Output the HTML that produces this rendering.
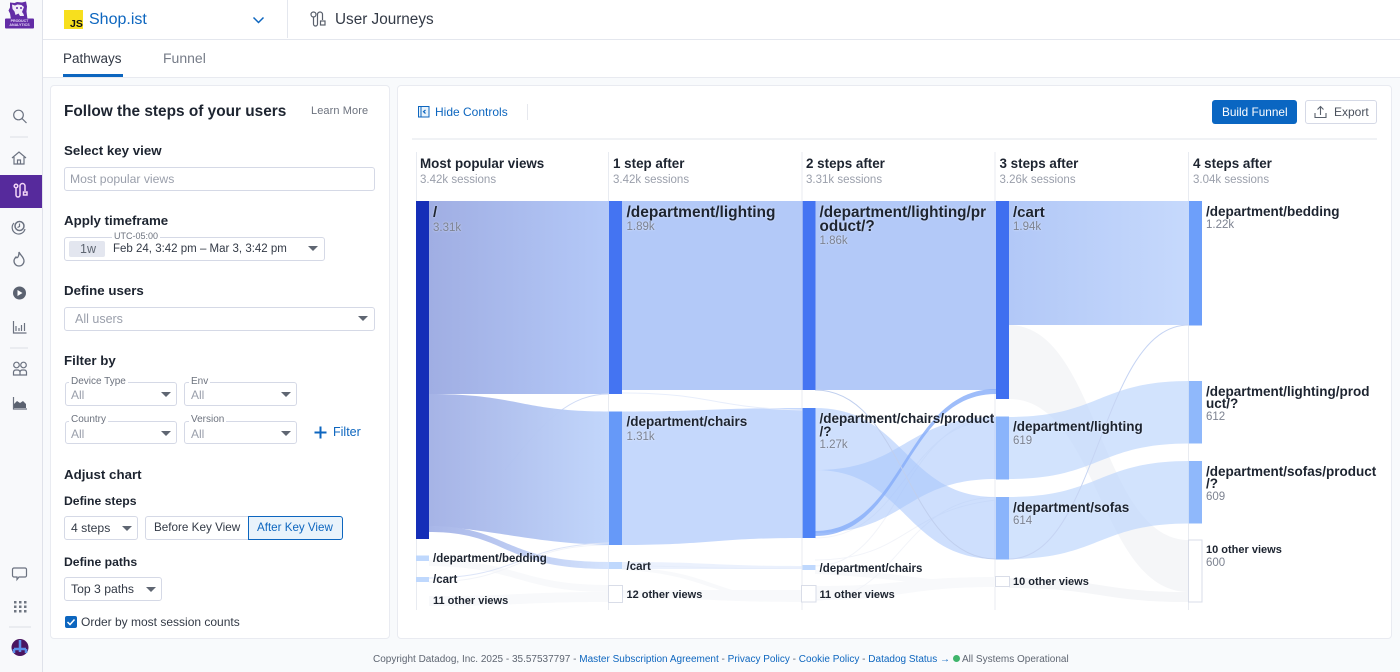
<!DOCTYPE html>
<html><head><meta charset="utf-8"><title>User Journeys</title>
<style>
*{box-sizing:border-box}
html,body{margin:0;padding:0;width:1400px;height:672px;overflow:hidden;background:#f8fafc;font-family:"Liberation Sans",sans-serif;color:#2a303c}
.a{position:absolute}
.t{position:absolute;white-space:nowrap;line-height:16px;height:16px;margin-top:1px}
.b{font-weight:700;color:#1d2430}
.h1{font-size:13.3px}
.box{position:absolute;background:#fff;border:1px solid #d5d9e6;border-radius:3px}
.car{position:absolute;width:0;height:0;border-left:5px solid transparent;border-right:5px solid transparent;border-top:5px solid #5f6672}
.g{color:#9a9fab}
.lab{font-size:10px;color:#6c727e;background:#fff;padding:0 2px;line-height:11px;height:11px}
.sa{font-size:13.5px;font-weight:700;color:#1d2430;text-shadow:0 0 2px rgba(255,255,255,.6)}
.sb{font-size:11.5px;color:#7d8391;text-shadow:0 0 2px rgba(255,255,255,.6)}
.hd{font-size:13.4px;font-weight:700;color:#1d2430}
.hs{font-size:11.5px;color:#9a9fab}
svg{position:absolute;overflow:visible}
</style></head><body>

<!-- sidebar -->
<div class="a" style="left:0;top:0;width:43px;height:672px;background:#f8f9fb;border-right:1px solid #dfe2ea"></div>
<svg style="left:0;top:0" width="43" height="672" fill="none" stroke="#6b7280" stroke-width="1.2">
<g stroke="none">
<path fill="#632ca6" d="M10 2.500l4.500.5 2.500-1 5 .5 4-1 1 5-.5 5 1 8H11l-1-6-1.500-3 1.500-3z"/>
<path fill="#f1ecf9" d="M12 4.500l3 1 2.500-1 4 .5 2.500 2-1 2.500-1 2.500 1.500 2 .5 2h-4l-1.500-2.500-3 1.500-1-3.500-2-2.500z"/>
<circle cx="17" cy="8" r="1" fill="#632ca6"/><circle cx="21" cy="8" r="1" fill="#632ca6"/>
<rect x="5" y="18.500" width="29" height="10" rx="1" fill="#632ca6"/>
</g>
<circle cx="18.500" cy="115" r="4.800"/><path d="M22 118.500l4.500 4.500"/>
<path d="M10 137h18M10 348h18M9 627h22" stroke="#e2e4ea"/>
<path d="M12 158l7-6 7 6M14 157v7h10v-7M17.500 164v-4h3v4"/>
<rect x="0" y="175" width="42" height="33" fill="#562a9c" stroke="none"/>
<g stroke="#f3d6f7" stroke-width="1.500"><path d="M16 187v8a2 2 0 0 0 4 0v-9a2.500 2.500 0 0 1 5 0v5"/><circle cx="16" cy="186" r="1.800"/><rect x="23.500" y="192" width="3.500" height="3"/></g>
<circle cx="19.500" cy="226" r="4.500" stroke-width="1.500"/><path d="M14 223a6.500 6.500 0 1 0 11 6M19.500 223.500v3l-2 1"/>
<path d="M19 252c1 3 5 5 5 9a5 5 0 0 1-10 0c0-2 1-3 2-4 1 2 3 0 3-5z" stroke-width="1.300"/>
<circle cx="19.500" cy="293" r="6.500" fill="#5b6270" stroke="none"/><path d="M17.500 290v6l5-3z" fill="#fff" stroke="none"/>
<path d="M13.500 321v12h13M16 331v-5M19 331v-3M21.500 331v-6M24.500 331v-8"/>
<circle cx="16.500" cy="365" r="2.800"/><circle cx="23.500" cy="365" r="2.800"/><path d="M13.500 375v-3a2.500 2.500 0 0 1 2.500-2h1.500a2.500 2.500 0 0 1 2.500 2v3zM20 375v-3a2.500 2.500 0 0 1 2.500-2h1.500a2.500 2.500 0 0 1 2.500 2v3z"/>
<path d="M13.500 397v12h13.500"/><path d="M14 408v-4l3-3 3 2 3-2 3 3v4z" fill="#5b6270" stroke="none"/>
<path d="M14 568h11a1.500 1.500 0 0 1 1.500 1.500v6a1.500 1.500 0 0 1-1.500 1.500h-6l-2 2.500v-2.500h-3a1.500 1.500 0 0 1-1.500-1.500v-6a1.500 1.500 0 0 1 1.500-1.500z"/>
<g fill="#6f7682" stroke="none"><rect x="14" y="601" width="2.500" height="2.500"/><rect x="19" y="601" width="2.500" height="2.500"/><rect x="24" y="601" width="2.500" height="2.500"/><rect x="14" y="605.500" width="2.500" height="2.500"/><rect x="19" y="605.500" width="2.500" height="2.500"/><rect x="24" y="605.500" width="2.500" height="2.500"/><rect x="14" y="610" width="2.500" height="2.500"/><rect x="19" y="610" width="2.500" height="2.500"/><rect x="24" y="610" width="2.500" height="2.500"/></g>
<circle cx="20" cy="647.500" r="8.500" fill="#4a1560" stroke="none"/><path d="M20 640v9M14 649h12M14 649v4M26 649v4M20 649v3" stroke="#5b8fe8" stroke-width="2.500"/>
</svg>
<div class="a" style="left:5px;top:19px;width:29px;text-align:center;font-size:3.600px;line-height:4.300px;font-weight:700;color:#e9dcf8;white-space:nowrap">PRODUCT<br>ANALYTICS</div>

<!-- header -->
<div class="a" style="left:43px;top:0;width:1357px;height:78px;background:#fff"></div>
<div class="a" style="left:43px;top:38.500px;width:1357px;height:1px;background:#e4e7ee"></div>
<div class="a" style="left:287px;top:0;width:1px;height:38px;background:#e4e7ee"></div>
<div class="a" style="left:43px;top:77px;width:1357px;height:1px;background:#e8eaf0"></div>
<div class="a" style="left:64px;top:10px;width:19px;height:19px;background:#f7df1e"></div>
<div class="t b" style="left:70px;top:15px;font-size:10.500px;color:#111">JS</div>
<div class="t" style="left:89px;top:9px;font-size:16px;line-height:19px;height:19px;color:#0d66bf">Shop.ist</div>
<svg style="left:252px;top:16px" width="14" height="10" fill="none" stroke="#0d66bf" stroke-width="1.500"><path d="M1.500 1.500L6.500 6.500 11.500 1.500"/></svg>
<svg style="left:310px;top:11px" width="18" height="17" fill="none" stroke="#59606c" stroke-width="1.200"><circle cx="3.500" cy="3.500" r="2.500"/><path d="M3.500 6v7a2 2 0 0 0 4 0V3.500a2.500 2.500 0 0 1 5 0V9"/><rect x="10.500" y="10" width="4.500" height="4"/></svg>
<div class="t" style="left:335px;top:9px;font-size:15.300px;line-height:19px;height:19px;color:#333a46">User Journeys</div>
<div class="t" style="left:63px;top:50px;font-size:13.500px;color:#333a46">Pathways</div>
<div class="a" style="left:63px;top:74px;width:60px;height:3px;background:#0d66bf"></div>
<div class="t" style="left:163px;top:49px;font-size:14px;color:#767c88">Funnel</div>

<!-- panels -->
<div class="a" style="left:50px;top:85px;width:340px;height:554px;background:#fff;border:1px solid #e9ebf1;border-radius:4px"></div>
<div class="a" style="left:397px;top:85px;width:995px;height:554px;background:#fff;border:1px solid #e9ebf1;border-radius:4px"></div>

<!-- left panel -->
<div class="t b" style="left:64px;top:103px;font-size:15.400px">Follow the steps of your users</div>
<div class="t" style="left:311px;top:102px;font-size:11px;color:#6c727e;letter-spacing:.1px">Learn More</div>

<div class="t b h1" style="left:64px;top:142px">Select key view</div>
<div class="box" style="left:64px;top:167px;width:311px;height:24px"></div>
<div class="t g" style="left:70px;top:170px;font-size:12.200px">Most popular views</div>

<div class="t b h1" style="left:64px;top:212px">Apply timeframe</div>
<div class="box" style="left:64px;top:237px;width:261px;height:24px"></div>
<div class="t lab" style="left:112px;top:230px;font-size:9px">UTC-05:00</div>
<div class="a" style="left:69px;top:241px;width:36px;height:16px;background:#e3e6ef;border-radius:2px"></div>
<div class="t" style="left:80px;top:240px;font-size:12.500px;color:#5f6672">1w</div>
<div class="t" style="left:113px;top:240px;font-size:11.500px;color:#333a46">Feb 24, 3:42 pm – Mar 3, 3:42 pm</div>
<div class="car" style="left:308px;top:246px"></div>

<div class="t b h1" style="left:64px;top:282px">Define users</div>
<div class="box" style="left:64px;top:307px;width:311px;height:24px"></div>
<div class="t g" style="left:75px;top:310px;font-size:12.500px">All users</div>
<div class="car" style="left:358px;top:316px"></div>

<div class="t b h1" style="left:64px;top:352px">Filter by</div>
<div class="box" style="left:65px;top:382px;width:112px;height:24px"></div>
<div class="t lab" style="left:69px;top:375px">Device Type</div>
<div class="t g" style="left:71px;top:386px;font-size:12px">All</div><div class="car" style="left:161px;top:392px"></div>
<div class="box" style="left:184px;top:382px;width:113px;height:24px"></div>
<div class="t lab" style="left:189px;top:375px">Env</div>
<div class="t g" style="left:191px;top:386px;font-size:12px">All</div><div class="car" style="left:281px;top:392px"></div>
<div class="box" style="left:65px;top:421px;width:112px;height:23px"></div>
<div class="t lab" style="left:69px;top:413px">Country</div>
<div class="t g" style="left:71px;top:425px;font-size:12px">All</div><div class="car" style="left:161px;top:431px"></div>
<div class="box" style="left:184px;top:421px;width:113px;height:23px"></div>
<div class="t lab" style="left:189px;top:413px">Version</div>
<div class="t g" style="left:191px;top:425px;font-size:12px">All</div><div class="car" style="left:281px;top:431px"></div>
<svg style="left:314px;top:426px" width="13" height="13" stroke="#0d66bf" stroke-width="2"><path d="M6.500 0.500v12M0.500 6.500h12"/></svg>
<div class="t" style="left:333px;top:423px;font-size:12.500px;color:#0d66bf">Filter</div>

<div class="t b h1" style="left:64px;top:466px">Adjust chart</div>
<div class="t b" style="left:64px;top:492px;font-size:12.200px">Define steps</div>
<div class="box" style="left:64px;top:516px;width:74px;height:24px"></div>
<div class="t" style="left:71px;top:519px;font-size:12.200px;color:#333a46">4 steps</div><div class="car" style="left:122px;top:526px"></div>
<div class="box" style="left:145px;top:516px;width:104px;height:24px;border-radius:3px 0 0 3px"></div>
<div class="t" style="left:154px;top:519px;font-size:11.700px;color:#333a46">Before Key View</div>
<div class="box" style="left:248px;top:516px;width:95px;height:24px;background:#e9f3fb;border-color:#0d66bf;border-radius:0 3px 3px 0"></div>
<div class="t" style="left:257px;top:519px;font-size:11.600px;color:#0d66bf">After Key View</div>
<div class="t b" style="left:64px;top:553px;font-size:12.200px">Define paths</div>
<div class="box" style="left:64px;top:577px;width:98px;height:24px"></div>
<div class="t" style="left:71px;top:580px;font-size:12.200px;color:#333a46">Top 3 paths</div><div class="car" style="left:146px;top:587px"></div>
<svg style="left:65px;top:616px" width="12" height="12"><rect width="12" height="12" rx="2" fill="#0d66bf"/><path d="M2.500 6l2.500 2.500 4.500-5" fill="none" stroke="#fff" stroke-width="1.500"/></svg>
<div class="t" style="left:81px;top:613px;font-size:12px;color:#333a46">Order by most session counts</div>

<!-- right panel top -->
<svg style="left:417px;top:105px" width="13" height="14" fill="none" stroke="#0d66bf"><rect x="1.500" y="1.500" width="10.500" height="10.500" fill="#e9f3fb"/><path d="M4 1.500v10.500" /><path d="M8.500 5L6.500 6.700l2 1.800" stroke-width="1.200"/></svg>
<div class="t" style="left:435px;top:103px;font-size:12px;color:#0d66bf">Hide Controls</div>
<div class="a" style="left:526.500px;top:104px;width:1px;height:16px;background:#e6e8ee"></div>
<div class="a" style="left:1212px;top:100px;width:85px;height:24px;background:#0a66c2;border-radius:3px"></div>
<div class="t" style="left:1222px;top:103px;font-size:11.800px;color:#fff">Build Funnel</div>
<div class="box" style="left:1305px;top:100px;width:72px;height:24px"></div>
<svg style="left:1314px;top:105px" width="14" height="14" fill="none" stroke="#59606c" stroke-width="1.100"><path d="M1 8v4.500h11V8M6.500 10V1.500M3.500 4.500l3-3 3 3"/></svg>
<div class="t" style="left:1334px;top:103px;font-size:12px;color:#4a515d">Export</div>
<div class="a" style="left:412px;top:137.500px;width:965px;height:2px;background:#f0f2f5"></div>

<!-- sankey -->
<svg style="left:0;top:0" width="1400" height="672" fill="none">
<defs>
<linearGradient id="g0" gradientUnits="userSpaceOnUse" x1="429" x2="609" y1="0" y2="0"><stop offset="0" stop-color="#a0aee3"/><stop offset="1" stop-color="#b4c9f8"/></linearGradient>
<linearGradient id="g0b" gradientUnits="userSpaceOnUse" x1="429" x2="609" y1="0" y2="0"><stop offset="0" stop-color="#a3b1e5"/><stop offset="1" stop-color="#c0d5fb"/></linearGradient>
<linearGradient id="g0c" gradientUnits="userSpaceOnUse" x1="429" x2="609" y1="0" y2="0"><stop offset="0" stop-color="#a8b6e8"/><stop offset="1" stop-color="#d4e3fd"/></linearGradient>
<linearGradient id="g3" gradientUnits="userSpaceOnUse" x1="1009" x2="1189" y1="0" y2="0"><stop offset="0" stop-color="#b2c8f7"/><stop offset="1" stop-color="#c6d9fc"/></linearGradient>
</defs>
<!-- grid -->
<g stroke="#e8ebf1"><path d="M416.500 152V610M608.500 152V610M802 152V610M995 152V610M1188.500 152V610"/></g>

<!-- grey flows -->
<g fill="#f8f9fb">
<path d="M429 596C519 596 519 592 609 592L609 602C519 602 519 606 429 606Z"/>
<path d="M429 560C519 560 519 585 609 585L609 592C519 592 519 567 429 566Z"/>
<path d="M622 590C712 590 712 590 802 590L802 602C712 602 712 598 622 598Z"/>
<path d="M622 568C712 568 712 598 802 600L802 602C712 602 712 574 622 570Z"/>
<path d="M815 586C905 586 905 577 996 577L996 587C905 587 905 600 815 600Z"/>
<path d="M815 570C905 570 905 582 996 582L996 586C905 586 905 578 815 574Z"/>
<path d="M1009 325C1099 325 1099 540 1189 540L1189 592C1099 592 1099 399 1009 399Z" fill="#f5f6f8"/>
<path d="M1009 578C1099 578 1099 592 1189 592L1189 602C1099 602 1099 588 1009 588Z" fill="#f5f6f8"/>
</g>
<g stroke="#f2f4f9" fill="none">
<path d="M429 582C519 582 519 545 609 545M815 538C905 538 905 420 996 420M815 560C905 560 905 510 996 500M622 566C712 566 712 570 802 568M815 566C900 566 900 420 996 416M815 600C900 600 900 500 996 497"/>
</g>

<!-- col0 -> col1 -->
<path fill="url(#g0)" d="M429 201H609V394H429Z"/>
<path stroke="#d0dbf5" d="M505 470C545 420 570 394 609 394"/>
<path fill="url(#g0b)" fill-opacity=".97" d="M429 394C519 394 519 411.500 609 411.500L609 545C530 543 500 530 429 526Z"/>
<path fill="url(#g0c)" d="M429 526C510 526 500 562 609 562L609 569C500 569 510 532 429 532Z"/>
<path stroke="#dde5f8" d="M429 578C519 578 519 545 609 543"/>

<!-- col1 -> col2 -->
<path fill="#b3c9f8" d="M622 201H802V390H622Z"/>
<path fill="#c5d8fc" d="M622 411.500C712 411.500 712 408 802 408L802 538C712 538 712 545 622 545Z"/>
<path stroke="#e8eefb" d="M622 393C712 393 712 408 802 410"/>
<path fill="#dde8fc" d="M622 562C712 562 712 566 802 566L802 569C712 569 712 569 622 569Z" opacity=".6"/>

<!-- col2 -> col3 -->
<path fill="#b3c9f8" d="M815 201H996V390H815Z"/>
<g fill="#a5c4fb" fill-opacity=".55">
<path d="M815 408C905 408 905 497 996 497L996 559C905 559 905 470 815 470Z"/>
<path d="M815 470C905 470 905 417 996 417L996 479C905 479 905 533 815 533Z"/>
</g>
<path fill="#86adf9" fill-opacity=".8" d="M815 531C905 531 905 389 996 389L996 394C905 394 905 536 815 536Z"/>
<path stroke="#c0cfee" d="M815 390C905 390 905 559 996 559"/>

<!-- col3 -> col4 -->
<path fill="url(#g3)" d="M1009 201H1189V325H1009Z"/>
<g fill="#bcd5fc" fill-opacity=".68">
<path d="M1009 417C1099 417 1099 381 1189 381L1189 443.500C1099 443.500 1099 479 1009 479Z"/>
<path d="M1009 497C1099 497 1099 461 1189 461L1189 523.500C1099 523.500 1099 559 1009 559Z"/>
</g>
<path stroke="#c6d4f3" d="M1009 559C1099 559 1099 325 1189 325"/>

<!-- nodes -->
<rect x="416" y="201" width="13" height="338" fill="#152eb8"/>
<rect x="416" y="555.500" width="13" height="5.500" fill="#bfd8fd"/>
<rect x="416" y="577" width="13" height="5" fill="#bfd8fd"/>
<rect x="609" y="201" width="13" height="193" fill="#4474f2"/>
<rect x="609" y="411.500" width="13" height="133.500" fill="#6699f8"/>
<rect x="609" y="562" width="13" height="7" fill="#bfd8fd"/>
<rect x="608.500" y="585.500" width="14" height="17" fill="#fff" stroke="#d9dde8"/>
<rect x="802.500" y="201" width="13" height="189" fill="#4474f2"/>
<rect x="802.500" y="408" width="13" height="130" fill="#4e83f6"/>
<rect x="802.500" y="565" width="13" height="5" fill="#bfd8fd"/>
<rect x="801.500" y="585.500" width="14.500" height="16.500" fill="#fff" stroke="#d9dde8"/>
<rect x="996" y="201" width="13" height="198" fill="#3f6ff0"/>
<rect x="996" y="416.500" width="13" height="63" fill="#8ab4fb"/>
<rect x="996" y="497" width="13" height="62.500" fill="#8ab4fb"/>
<rect x="995.500" y="576.500" width="14" height="10" fill="#fff" stroke="#d9dde8"/>
<rect x="1189" y="201" width="13" height="124.500" fill="#6d9ffa"/>
<rect x="1189" y="381" width="13" height="62.500" fill="#8fb8fb"/>
<rect x="1189" y="461" width="13" height="62.500" fill="#8fb8fb"/>
<rect x="1188.500" y="540" width="13.500" height="62" fill="#fff" stroke="#d9dde8"/>
</svg>

<!-- column headers -->
<div class="t hd" style="left:420px;top:155px">Most popular views</div><div class="t hs" style="left:420px;top:171px">3.42k sessions</div>
<div class="t hd" style="left:613px;top:155px">1 step after</div><div class="t hs" style="left:613px;top:171px">3.42k sessions</div>
<div class="t hd" style="left:806px;top:155px">2 steps after</div><div class="t hs" style="left:806px;top:171px">3.31k sessions</div>
<div class="t hd" style="left:999.500px;top:155px">3 steps after</div><div class="t hs" style="left:999.500px;top:171px">3.26k sessions</div>
<div class="t hd" style="left:1193px;top:155px">4 steps after</div><div class="t hs" style="left:1193px;top:171px">3.04k sessions</div>

<!-- sankey labels -->
<div class="t sa" style="left:433px;top:204px;font-size:15px">/</div><div class="t sb" style="left:433px;top:219px">3.31k</div>
<div class="t sa" style="left:626.500px;top:204px;font-size:15.500px">/department/lighting</div><div class="t sb" style="left:626.500px;top:218px">1.89k</div>
<div class="t sa" style="left:819.500px;top:204px;font-size:15.300px">/department/lighting/pr</div><div class="t sa" style="left:819.500px;top:218px;font-size:15.300px">oduct/?</div><div class="t sb" style="left:819.500px;top:232px">1.86k</div>
<div class="t sa" style="left:1013px;top:204px;font-size:15px">/cart</div><div class="t sb" style="left:1013px;top:218px">1.94k</div>
<div class="t sa" style="left:1206px;top:203px">/department/bedding</div><div class="t sb" style="left:1206px;top:216px">1.22k</div>
<div class="t sa" style="left:626.500px;top:413px">/department/chairs</div><div class="t sb" style="left:626.500px;top:428px">1.31k</div>
<div class="t sa" style="left:819.500px;top:410px">/department/chairs/product</div><div class="t sa" style="left:819.500px;top:423px">/?</div><div class="t sb" style="left:819.500px;top:436px">1.27k</div>
<div class="t sa" style="left:1013px;top:418px">/department/lighting</div><div class="t sb" style="left:1013px;top:432px">619</div>
<div class="t sa" style="left:1013px;top:499px">/department/sofas</div><div class="t sb" style="left:1013px;top:512px">614</div>
<div class="t sa" style="left:1206px;top:383px">/department/lighting/prod</div><div class="t sa" style="left:1206px;top:395px">uct/?</div><div class="t sb" style="left:1206px;top:408px">612</div>
<div class="t sa" style="left:1206px;top:463px">/department/sofas/product</div><div class="t sa" style="left:1206px;top:475px">/?</div><div class="t sb" style="left:1206px;top:488px">609</div>
<div class="t sa" style="left:1206px;top:541px;font-size:11px">10 other views</div><div class="t sb" style="left:1206px;top:554px">600</div>
<div class="t sa" style="left:433px;top:550px;font-size:11.500px">/department/bedding</div>
<div class="t sa" style="left:433px;top:571px;font-size:11.500px">/cart</div>
<div class="t sa" style="left:433px;top:592px;font-size:11px">11 other views</div>
<div class="t sa" style="left:626.500px;top:558px;font-size:11.500px">/cart</div>
<div class="t sa" style="left:626.500px;top:586px;font-size:11px">12 other views</div>
<div class="t sa" style="left:819.500px;top:560px;font-size:11.500px">/department/chairs</div>
<div class="t sa" style="left:819.500px;top:586px;font-size:11px">11 other views</div>
<div class="t sa" style="left:1013px;top:573px;font-size:11px">10 other views</div>

<!-- footer -->
<div class="t" style="left:373px;top:651px;font-size:10px;color:#5f6672">Copyright Datadog, Inc. 2025 - 35.57537797 - <span style="color:#0d66bf">Master Subscription Agreement</span> - <span style="color:#0d66bf">Privacy Policy</span> - <span style="color:#0d66bf">Cookie Policy</span> - <span style="color:#0d66bf">Datadog Status →</span> <span style="display:inline-block;width:7px;height:7px;border-radius:50%;background:#3fb56b"></span> All Systems Operational</div>
</body></html>
